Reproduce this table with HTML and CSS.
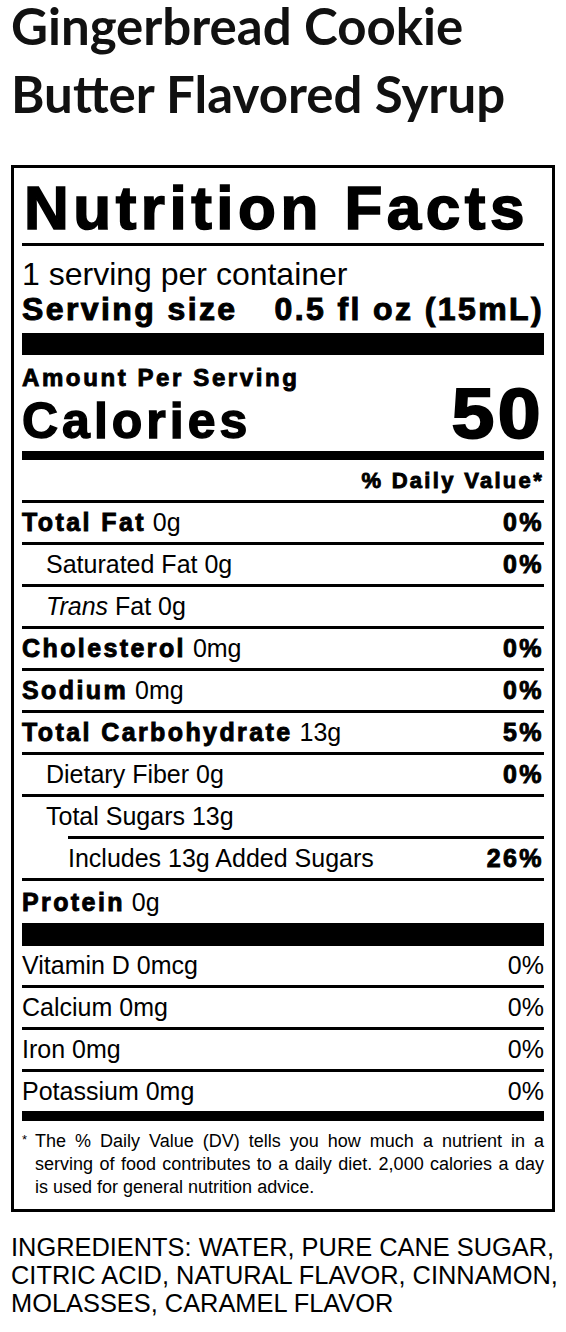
FILE: index.html
```html
<!DOCTYPE html>
<html lang="en">
<head>
    <meta charset="UTF-8">
    <meta name="viewport" content="width=device-width, initial-scale=1.0">
    <title>Gingerbread Cookie Butter Flavored Syrup - Nutrition Facts</title>
    <link rel="stylesheet" href="styles.css">
</head>
<body>

    <div class="page">
        <h1 class="product-title">
            <span class="title-line title-line-first">Gingerbread Cookie</span>
            <span class="title-line">Butter Flavored Syrup</span>
        </h1>

        <!-- Label -->
        <div class="nf-label">
            <h2 class="nf-title">Nutrition Facts</h2>

            <p class="nf-servings">1 serving per container</p>
            <p class="nf-size"><span class="hv">Serving size</span><span class="hv">0.5 fl oz (15mL)</span></p>
            <div class="nf-bar nf-bar-lg"></div>

            <p class="nf-amount hv">Amount Per Serving</p>
            <p class="nf-calories"><span class="hv nf-cal-label">Calories</span><span class="hv nf-cal-num">50</span></p>
            <div class="nf-bar nf-bar-md"></div>

            <p class="nf-dv-head hv">% Daily Value*</p>

            <div class="nf-row"><span><b class="hv">Total Fat</b> 0g</span><b class="hv">0%</b></div>
            <div class="nf-row nf-sub"><span>Saturated Fat 0g</span><b class="hv">0%</b></div>
            <div class="nf-row nf-sub"><span><i>Trans</i> Fat 0g</span></div>
            <div class="nf-row"><span><b class="hv">Cholesterol</b> 0mg</span><b class="hv">0%</b></div>
            <div class="nf-row"><span><b class="hv">Sodium</b> 0mg</span><b class="hv">0%</b></div>
            <div class="nf-row"><span><b class="hv">Total Carbohydrate</b> 13g</span><b class="hv">5%</b></div>
            <div class="nf-row nf-sub"><span>Dietary Fiber 0g</span><b class="hv">0%</b></div>
            <div class="nf-row nf-sub nf-open"><span>Total Sugars 13g</span></div>
            <div class="nf-added">
                <div class="nf-row nf-added-inner"><span>Includes 13g Added Sugars</span><b class="hv">26%</b></div>
            </div>
            <div class="nf-row nf-open nf-protein"><span><b class="hv">Protein</b> 0g</span></div>
            <div class="nf-bar nf-bar-xl"></div>

            <div class="nf-row"><span>Vitamin D 0mcg</span><span>0%</span></div>
            <div class="nf-row"><span>Calcium 0mg</span><span>0%</span></div>
            <div class="nf-row"><span>Iron 0mg</span><span>0%</span></div>
            <div class="nf-row nf-open"><span>Potassium 0mg</span><span>0%</span></div>
            <div class="nf-bar nf-bar-end"></div>

            <div class="nf-foot">
                <span class="nf-star">*</span>
                <p>The % Daily Value (DV) tells you how much a nutrient in a serving of food contributes to a daily diet. 2,000 calories a day is used for general nutrition advice.</p>
            </div>
        </div>

        <p class="ingredients">INGREDIENTS: WATER, PURE CANE SUGAR, CITRIC ACID, NATURAL FLAVOR, CINNAMON, MOLASSES, CARAMEL FLAVOR</p>
    </div>

</body>
</html>
```

FILE: styles.css
```css
/* Page */
body {
    margin: 0;
    background: #fff;
    color: #000;
    font-family: "Liberation Sans", Arial, sans-serif;
}

.page {
    padding: 0 11px;
}

.product-title {
    font-family: Lato, "Open Sans", sans-serif;
    font-weight: 700;
    font-size: 51px;
    color: #111;
    margin: 0 0 29px;
}

.title-line {
    display: block;
    line-height: 85px;
}

.title-line-first {
    line-height: 51px;
}

/* Heavy (black) text */
.hv {
    font-weight: 700;
    -webkit-text-stroke: 0.9px #000;
    letter-spacing: 2.4px;
}

/* Label box */
.nf-label {
    border: 3px solid #000;
    padding: 0 8px 10px;
}

.nf-label p {
    margin: 0;
}

.nf-title {
    margin: 0;
    padding: 4px 0 0 2px;
    font-size: 62px;
    line-height: 71px;
    font-weight: 700;
    letter-spacing: 4.5px;
    -webkit-text-stroke: 1.6px #000;
    white-space: nowrap;
    border-bottom: 3px solid #000;
}

.nf-servings {
    padding-top: 10px;
    font-size: 32px;
    line-height: 36px;
}

.nf-size {
    display: flex;
    justify-content: space-between;
    font-size: 32px;
    line-height: 34px;
    padding-bottom: 7px;
}

.nf-size .hv {
    letter-spacing: 2.4px;
    -webkit-text-stroke: 1px #000;
}

.nf-bar {
    background: #000;
}

.nf-bar-lg {
    height: 22px;
}

.nf-bar-md {
    height: 9px;
    margin-top: 6px;
}

.nf-bar-xl {
    height: 23px;
}

.nf-bar-end {
    height: 10px;
}

.nf-amount {
    padding-top: 11px;
    font-size: 24px;
    line-height: 24px;
    letter-spacing: 2.6px;
}

.nf-calories {
    display: flex;
    justify-content: space-between;
    align-items: baseline;
    line-height: 48px;
}

.nf-cal-label {
    font-size: 50px;
    letter-spacing: 4px;
    -webkit-text-stroke: 1.4px #000;
}

.nf-cal-num {
    font-size: 70px;
    letter-spacing: 3px;
    -webkit-text-stroke: 2px #000;
    transform: scaleX(1.1);
    transform-origin: right center;
}

.nf-dv-head {
    text-align: right;
    padding: 9px 0 7px;
    font-size: 22px;
    line-height: 24px;
    letter-spacing: 2.3px;
    border-bottom: 3px solid #000;
}

/* Nutrient rows */
.nf-row {
    display: flex;
    justify-content: space-between;
    font-size: 25px;
    line-height: 39px;
    border-bottom: 3px solid #000;
}

.nf-sub {
    padding-left: 24px;
}

.nf-open {
    border-bottom: none;
}

.nf-added {
    padding-left: 46px;
    border-bottom: 3px solid #000;
}

.nf-added-inner {
    border-bottom: none;
    border-top: 3px solid #000;
}

.nf-protein {
    line-height: 42px;
}

/* Footnote */
.nf-foot {
    display: flex;
    align-items: flex-start;
    padding-top: 9px;
    font-size: 18px;
    line-height: 23px;
}

.nf-star {
    flex-shrink: 0;
    width: 13px;
    font-size: 13px;
    line-height: 19px;
}

.nf-foot p {
    text-align: justify;
}

/* Ingredients */
.ingredients {
    margin: 21px -11px 0 0;
    font-size: 25.4px;
    line-height: 28px;
}
```
